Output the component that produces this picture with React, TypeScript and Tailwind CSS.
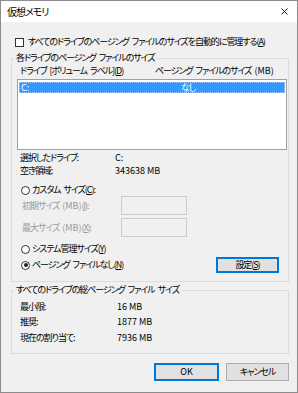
import React from 'react';

const K = ({ children }: { children: string }) => (
  <span className="underline underline-offset-[1px]">{children}</span>
);

// latin-only values keep normal spacing
const L = ({ children, className = '' }: { children: React.ReactNode; className?: string }) => (
  <span className={`tracking-normal [word-spacing:normal] ${className}`}>{children}</span>
);

function Radio({ checked }: { checked?: boolean }) {
  return (
    <span className="w-[9px] h-[9px] shrink-0 rounded-full border border-[#333333] bg-white flex items-center justify-center">
      {checked && <span className="w-[4px] h-[4px] rounded-full bg-[#222222]" />}
    </span>
  );
}

function Button({ children, primary, className = '' }: { children: React.ReactNode; primary?: boolean; className?: string }) {
  return (
    <div
      className={`flex items-center justify-center bg-[#e1e1e1] ${
        primary ? 'border-2 border-[#0078d7]' : 'border border-[#adadad]'
      } ${className}`}
    >
      {children}
    </div>
  );
}

export default function App() {
  return (
    <div className="w-[298px] h-[393px] border border-[#8c8c8c] bg-[#f0f0f0] flex flex-col text-[9px] leading-[12px] tracking-[-1.05px] [word-spacing:2px] whitespace-nowrap text-black font-['Noto_Sans_CJK_JP',sans-serif] [font-feature-settings:'palt']">
      {/* Title bar */}
      <div className="h-[21px] shrink-0 bg-white flex items-center justify-between pl-[6px] pr-[9px]">
        <span className="text-[10px] tracking-[-1px]">仮想メモリ</span>
        <svg width="7" height="7" viewBox="0 0 7 7">
          <path d="M0.5 0.5 L6.5 6.5 M6.5 0.5 L0.5 6.5" stroke="#111" strokeWidth="0.9" />
        </svg>
      </div>

      <div className="flex-1 flex flex-col pl-[10px] pr-[8px]">
        {/* Auto manage */}
        <div className="mt-[14px] h-[12px] flex items-center gap-[4px] pl-[4px]">
          <span className="w-[9px] h-[9px] border border-[#333333] bg-white" />
          <span>
            すべてのドライブのページング ファイルのサイズを自動的に管理する(<K>A</K>)
          </span>
        </div>

        {/* Per drive group */}
        <fieldset className="mt-[4px] border border-[#dcdcdc] p-0 m-0">
          <legend className="ml-[2px] px-[2px] leading-[12px]">各ドライブのページング ファイルのサイズ</legend>
          <div className="flex flex-col pl-[5px] pr-[1px] pb-[8px]">
            <div className="mt-[1px] h-[12px] flex pl-[3px]">
              <span className="w-[135px]">
                ドライブ [ボリューム ラベル](<K>D</K>)
              </span>
              <span>
                ページング ファイルのサイズ <L>(MB)</L>
              </span>
            </div>

            <div className="mt-[2px] h-[71px] border border-[#a0a0a0] bg-white px-[1px] pt-[2px]">
              <div className="h-[11px] flex items-center bg-[#3399ff] text-white border border-dotted border-[#a8d1ff]">
                <L className="w-[161px] pl-[1px]">C:</L>
                <span>なし</span>
              </div>
            </div>

            <div className="mt-[2px] grid grid-cols-[95px_1fr] pl-[3px] gap-y-[1px]">
              <span>選択したドライブ:</span>
              <L>C:</L>
              <span>空き領域:</span>
              <L>343638 MB</L>
            </div>

            <div className="mt-[7px] h-[12px] flex items-center gap-[2px] pl-[4px]">
              <Radio />
              <span>
                カスタム サイズ(<K>C</K>):
              </span>
            </div>

            <div className="h-[19px] flex items-center pl-[5px] text-[#9a9a9a]">
              <span className="w-[99px]">
                初期サイズ <L>(MB)</L>(<K>I</K>):
              </span>
              <div className="w-[66px] h-[19px] border border-[#cccccc]" />
            </div>
            <div className="mt-[3px] h-[19px] flex items-center pl-[5px] text-[#9a9a9a]">
              <span className="w-[99px]">
                最大サイズ <L>(MB)</L>(<K>X</K>):
              </span>
              <div className="w-[66px] h-[19px] border border-[#cccccc]" />
            </div>

            <div className="mt-[6px] h-[12px] flex items-center gap-[2px] pl-[4px]">
              <Radio />
              <span>
                システム管理サイズ(<K>Y</K>)
              </span>
            </div>

            <div className="mt-[2px] h-[16px] flex items-center pl-[4px]">
              <Radio checked />
              <span className="ml-[2px]">
                ページング ファイルなし(<K>N</K>)
              </span>
              <Button primary className="ml-auto mr-[8px] w-[63px] h-[16px]">
                <span>
                  設定(<K>S</K>)
                </span>
              </Button>
            </div>
          </div>
        </fieldset>

        {/* Totals group */}
        <fieldset className="mt-[2px] border border-[#dcdcdc] p-0 m-0">
          <legend className="ml-[2px] px-[2px] leading-[12px]">すべてのドライブの総ページング ファイル サイズ</legend>
          <div className="grid grid-cols-[97px_1fr] pl-[8px] pt-[5px] pb-[9px] gap-y-[3px]">
            <span>最小限:</span>
            <L>16 MB</L>
            <span>推奨:</span>
            <L>1877 MB</L>
            <span className="mt-[1px]">現在の割り当て:</span>
            <L className="mt-[1px]">7936 MB</L>
          </div>
        </fieldset>

        <div className="mt-[9px] flex justify-end gap-[7px]">
          <Button primary className="w-[65px] h-[18px] tracking-normal">
            OK
          </Button>
          <Button className="w-[63px] h-[18px]">キャンセル</Button>
        </div>
      </div>
    </div>
  );
}
